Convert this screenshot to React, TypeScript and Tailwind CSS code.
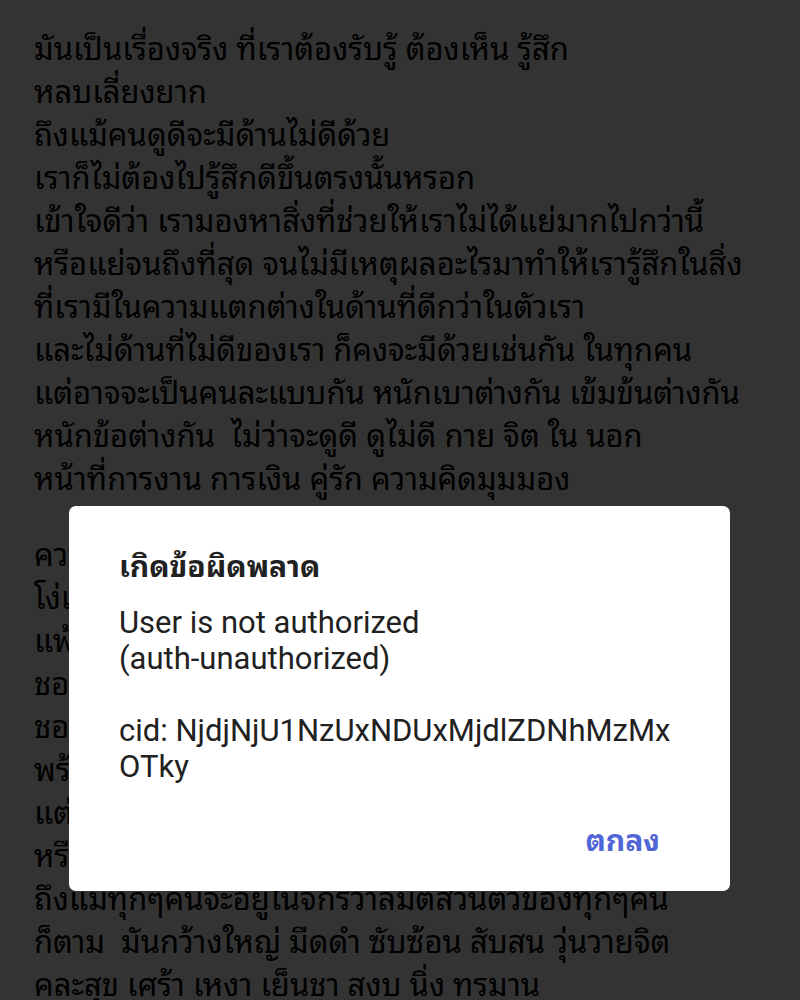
import React from 'react';

const firstPara = [
  'มันเป็นเรื่องจริง ที่เราต้องรับรู้ ต้องเห็น รู้สึก',
  'หลบเลี่ยงยาก',
  'ถึงแม้คนดูดีจะมีด้านไม่ดีด้วย',
  'เราก็ไม่ต้องไปรู้สึกดีขึ้นตรงนั้นหรอก',
  'เข้าใจดีว่า เรามองหาสิ่งที่ช่วยให้เราไม่ได้แย่มากไปกว่านี้',
  'หรือแย่จนถึงที่สุด จนไม่มีเหตุผลอะไรมาทำให้เรารู้สึกในสิ่ง',
  'ที่เรามีในความแตกต่างในด้านที่ดีกว่าในตัวเรา',
  'และไม่ด้านที่ไม่ดีของเรา ก็คงจะมีด้วยเช่นกัน ในทุกคน',
  'แต่อาจจะเป็นคนละแบบกัน หนักเบาต่างกัน เข้มข้นต่างกัน',
  'หนักข้อต่างกัน  ไม่ว่าจะดูดี ดูไม่ดี กาย จิต ใน นอก',
  'หน้าที่การงาน การเงิน คู่รัก ความคิดมุมมอง',
];

const secondPara = [
  'ความสุข ความทุกข์ ความฉลาด ความ',
  'โง่เขลา ความรัก ความเกลียด ชนะ',
  'แพ้ ได้ เสีย ผิดหวัง สมหวัง',
  'ชอบ ไม่ชอบ อยากได้ ไม่อยากได้',
  'ชอบมาก ชอบน้อย ไม่เหมือนกัน',
  'พร้อมจะเจอ ไม่พร้อมจะเจอ',
  'แต่ทุกอย่างก็มีอยู่จริง',
  'หรือไม่ก็เป็นแค่ความคิดของเรา',
  'ถึงแม้ทุกๆคนจะอยู่ในจักรวาลมิติส่วนตัวของทุกๆคน',
  'ก็ตาม  มันกว้างใหญ่ มืดดำ ซับซ้อน สับสน วุ่นวายจิต',
  'คละสุข เศร้า เหงา เย็นชา สงบ นิ่ง ทรมาน',
];

const thaiFont = "font-['Noto_Sans_Thai_Looped','Noto_Sans_Thai','Noto_Sans',sans-serif]";

const App: React.FC = () => {
  return (
    <div className="relative w-[800px] h-[1000px] overflow-hidden bg-white">
      <div className={`pt-[25px] pl-[34px] pr-[20px] text-black text-[31px] leading-[43px] ${thaiFont}`}>
        <div className="mb-[33px]">
          {firstPara.map((line, i) => (
            <div key={i} className="whitespace-pre">{line}</div>
          ))}
        </div>
        <div>
          {secondPara.map((line, i) => (
            <div key={i} className="whitespace-pre">{line}</div>
          ))}
        </div>
      </div>

      {/* scrim + dialog */}
      <div className="absolute inset-0 bg-black/80" />
      <div className="absolute left-[69px] top-[506px] w-[661px] h-[385px] bg-white rounded-[7px] pt-[40px] px-[50px] flex flex-col">
        <div className={`text-[30px] leading-[36px] font-bold text-[#212121] ${thaiFont}`}>เกิดข้อผิดพลาด</div>
        <div className="mt-[23px] text-[31px] leading-[36px] text-[#212121] font-['Roboto',sans-serif]">
          <div>User is not authorized</div>
          <div>(auth-unauthorized)</div>
          <div className="h-[36px]" />
          <div>cid: NjdjNjU1NzUxNDUxMjdlZDNhMzMx</div>
          <div>OTky</div>
        </div>
        <div className="flex justify-end mt-[35px] pr-[20px]">
          <button className={`text-[30px] leading-[36px] font-bold text-[#5066d6] ${thaiFont}`}>ตกลง</button>
        </div>
      </div>
    </div>
  );
};

export default App;
